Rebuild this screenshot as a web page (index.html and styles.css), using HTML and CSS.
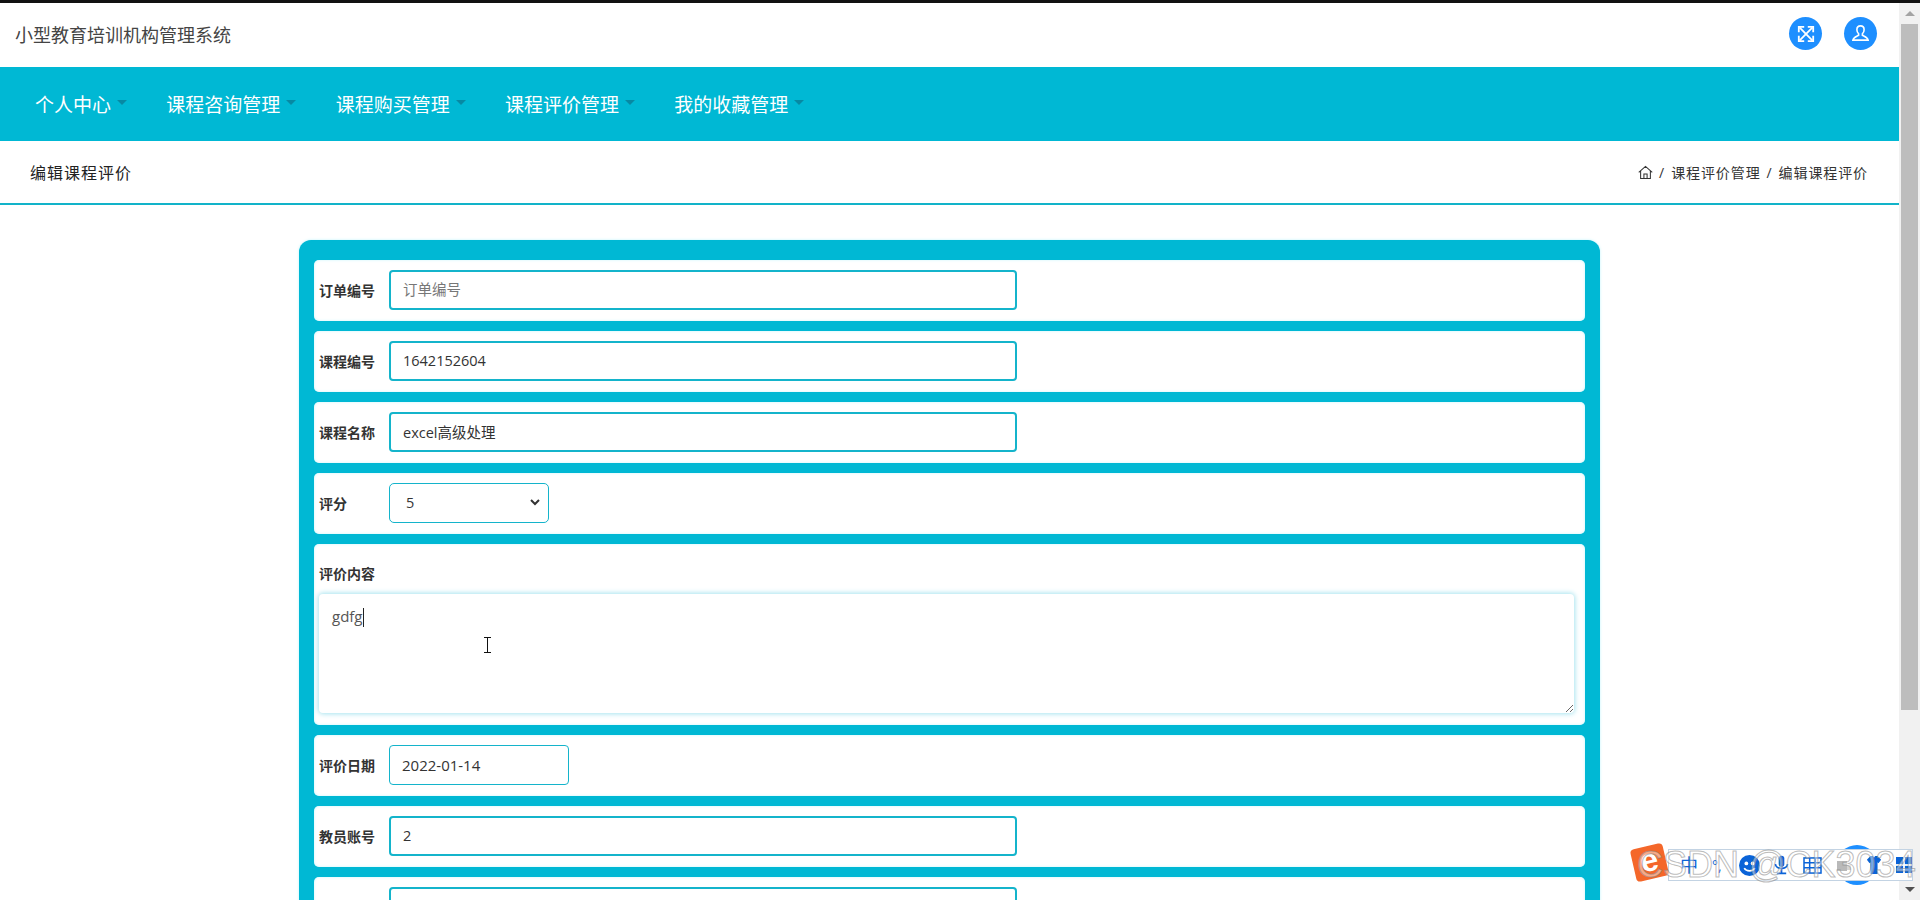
FILE: index.html
```html
<!DOCTYPE html>
<html lang="zh-CN">
<head>
<meta charset="utf-8">
<title>小型教育培训机构管理系统</title>
<link rel="stylesheet" href="styles.css">
</head>
<body>
<div class="window">
  <div class="blackbar"></div>
  <div class="viewport">
    <main class="page">
      <header class="topbar">
        <div class="brand">小型教育培训机构管理系统</div>
        <div class="top-actions">
          <span class="round">
            <svg viewBox="0 0 20 20" width="18" height="18" fill="none" stroke="#fff" stroke-width="2"><path d="M3 3 17 17M17 3 3 17"/><path d="M2 8V2h6M12 2h6v6M18 12v6h-6M8 18H2v-6"/></svg>
          </span>
          <span class="round">
            <svg viewBox="0 0 20 20" width="19" height="19" fill="none" stroke="#fff" stroke-width="1.700"><path d="M10 2c-2.500 0-3.800 1.800-3.800 4 0 1.800.8 3.300 1.800 4.300v1.500c-1.500 1-5.500 1.700-6 5.200h16c-.5-3.500-4.500-4.200-6-5.200v-1.500c1-1 1.800-2.500 1.800-4.300 0-2.200-1.300-4-3.800-4z"/></svg>
          </span>
        </div>
      </header>
      <nav class="mainnav">
        <a class="navitem">个人中心<i class="caret"></i></a>
        <a class="navitem">课程咨询管理<i class="caret"></i></a>
        <a class="navitem">课程购买管理<i class="caret"></i></a>
        <a class="navitem">课程评价管理<i class="caret"></i></a>
        <a class="navitem">我的收藏管理<i class="caret"></i></a>
      </nav>
      <div class="crumbbar">
        <div class="pagetitle">编辑课程评价</div>
        <div class="crumbs">
          <svg viewBox="0 0 16 16" width="15" height="15" fill="none" stroke="#333" stroke-width="1.100"><path d="M.8 7.800 8 1.500l7.200 6.300M2.800 6.500v8h10.400v-8M6.300 14.500V9.500h3.400v5"/></svg>
          <span>/</span><span>课程评价管理</span><span>/</span><span>编辑课程评价</span>
        </div>
      </div>
      <section class="content">
        <form class="panel">
          <div class="field"><label class="lbl">订单编号</label><input class="inp" type="text" placeholder="订单编号"></div>
          <div class="field"><label class="lbl">课程编号</label><input class="inp" type="text" value="1642152604"></div>
          <div class="field"><label class="lbl">课程名称</label><input class="inp" type="text" value="excel高级处理"></div>
          <div class="field"><label class="lbl">评分</label><select class="sel"><option>5</option></select></div>
          <div class="field field-area"><label class="lbl-top">评价内容</label><textarea class="area">gdfg</textarea></div>
          <div class="field"><label class="lbl">评价日期</label><input class="date" type="text" value="2022-01-14"></div>
          <div class="field"><label class="lbl">教员账号</label><input class="inp" type="text" value="2"></div>
          <div class="field"><label class="lbl"></label><input class="inp" type="text"></div>
        </form>
      </section>
    </main>
    <aside class="scrollbar">
      <div class="sb-btn"><i class="sb-up"></i></div>
      <div class="sb-thumb"></div>
      <div class="sb-track"></div>
      <div class="sb-btn"><i class="sb-down"></i></div>
    </aside>
  </div>

  <i class="textcaret"></i>
  <svg class="ibeam" viewBox="0 0 9 16" width="9" height="16" fill="none" stroke="#111" stroke-width="1"><path d="M1 .5h7M1 15.500h7M4.500 .5v15"/></svg>

  <div class="fab"></div>
  <div class="imebar">
    <span class="ime-zh">中</span>
    <span class="ime-dot">°,</span>
    <svg class="ime-ic" viewBox="0 0 20 20" width="21" height="21"><circle cx="10" cy="10" r="10" fill="#0a63d8"/><circle cx="7" cy="8" r="1.800" fill="#fff"/><circle cx="13" cy="8" r="1.800" fill="#fff"/><path d="M5 12.500c2 3.500 8 3.500 10 0" stroke="#fff" stroke-width="1.500" fill="none"/></svg>
    <svg class="ime-ic" viewBox="0 0 16 20" width="15" height="20"><rect x="5" y="0" width="6" height="12" rx="3" fill="#0a63d8"/><path d="M1.500 9c0 6 13 6 13 0M8 14.500V19M3 19h10" stroke="#0a63d8" stroke-width="1.800" fill="none"/></svg>
    <svg class="ime-ic" viewBox="0 0 20 18" width="19" height="17" fill="none" stroke="#0a63d8" stroke-width="1.600"><rect x="1" y="1" width="18" height="16"/><path d="M1 6h18M1 11.500h18M7 1v16M13 1v16"/></svg>
    <svg class="ime-ic" viewBox="0 0 16 14" width="16" height="14"><rect x="1" y="3" width="10" height="10" fill="#b9b9b9"/><rect x="11" y="7" width="4" height="5" fill="#d5d5d5"/></svg>
    <svg class="ime-ic" viewBox="0 0 18 20" width="16" height="20"><path d="M5 0h3c0 2 2 2 2 0h3l4 4-3 4-1-1v13H5V7L4 8 1 4z" fill="#0a63d8"/></svg>
    <svg class="ime-ic" viewBox="0 0 18 18" width="16" height="16" fill="#0a63d8"><rect x="0" y="0" width="8" height="8"/><rect x="10" y="0" width="8" height="8"/><rect x="0" y="10" width="8" height="8"/><rect x="10" y="10" width="8" height="8"/></svg>
  </div>
  <div class="csdn-logo"><span class="csdn-e">e</span></div>
  <div class="watermark">CSDN @CK3034</div>
</div>
</body>
</html>
```
FILE: styles.css
```css
* { box-sizing: border-box; }
html, body { margin: 0; padding: 0; height: 900px; overflow: hidden; background: #fff; }
body { font-family: "Open Sans", "Noto Sans CJK SC", sans-serif; color: #333; }

.window { position: relative; width: 1920px; height: 900px; display: flex; flex-direction: column; overflow: hidden; }
.blackbar { height: 3px; background: #111; flex: none; }
.viewport { flex: 1; display: flex; min-height: 0; }
.page { width: 1899px; flex: none; overflow: hidden; }

.topbar { height: 64px; display: flex; align-items: center; justify-content: space-between; padding: 0 22px 3px 15px; }
.brand { font-size: 18px; color: #444; }
.top-actions { display: flex; gap: 22px; }
.round { width: 33px; height: 33px; border-radius: 50%; background: #1e8fff; display: flex; align-items: center; justify-content: center; }

.mainnav { height: 74px; background: #00b8d4; display: flex; align-items: center; gap: 39.300px; padding-left: 35px; }
.navitem { font-size: 19px; color: #fff; display: flex; align-items: center; }
.caret { width: 0; height: 0; margin: 0 0 3px 6px; border-left: 5px solid transparent; border-right: 5px solid transparent; border-top: 5px solid #0789a3; }

.crumbbar { height: 64px; border-bottom: 2px solid #12b3c9; display: flex; align-items: center; justify-content: space-between; padding: 0 31px 0 30px; }
.pagetitle { font-size: 16px; letter-spacing: 1px; color: #222; }
.crumbs { display: flex; align-items: center; gap: 6px; font-size: 14px; letter-spacing: .9px; color: #333; }

.content { padding-top: 35px; }
.panel { width: 1301px; margin: 0 auto; background: #00b8d4; border-radius: 12px; padding: 20px 15px; box-shadow: 0 0 3px #bff3fb; }
.field { height: 61px; margin-bottom: 10px; background: #fff; border-radius: 5px; display: flex; align-items: center; padding: 0 0 2px 5px; box-shadow: inset 0 0 3px #c8f6fb; }
.lbl { width: 70px; font-size: 14px; font-weight: 700; color: #333; flex: none; }
.inp { width: 628px; height: 40px; border: 2px solid #14b4cb; border-radius: 4px; padding: 0 12px; font: 14.500px "Open Sans", "Noto Sans CJK SC", sans-serif; color: #333; background: #fff; outline: none; }
.inp::placeholder { color: #777; }
.sel { width: 160px; height: 40px; border: 1px solid #14b4cb; border-radius: 5px; padding: 0 16px; font: 14.500px "Open Sans", "Noto Sans CJK SC", sans-serif; color: #333; outline: none; appearance: none; background: #fff url("data:image/svg+xml,%3Csvg xmlns='http://www.w3.org/2000/svg' width='10' height='7'%3E%3Cpath d='M1 1l4 4 4-4' fill='none' stroke='%23333' stroke-width='2'/%3E%3C/svg%3E") no-repeat right 8px center; }
.date { width: 180px; height: 40px; border: 1px solid #14b4cb; border-radius: 4px; padding: 0 12px; font: 15px "Open Sans", "Noto Sans CJK SC", sans-serif; color: #333; background: #fff; outline: none; }
.field-area { height: 181px; display: block; padding: 20px 0 0 5px; }
.lbl-top { display: block; height: 20px; line-height: 20px; font-size: 14px; font-weight: 700; color: #333; }
.area { display: block; width: 1255px; height: 119px; margin-top: 10px; border: 0; border-radius: 4px; padding: 12px 13px; font: 15px "Open Sans", "Noto Sans CJK SC", sans-serif; color: #555; background: #fff; box-shadow: 0 0 5px 1px #a6e3ef; outline: none; }

.scrollbar { width: 21px; flex: none; background: #f1f1f1; display: flex; flex-direction: column; }
.sb-btn { height: 21px; flex: none; display: flex; align-items: center; justify-content: center; }
.sb-up { width: 0; height: 0; border-left: 5px solid transparent; border-right: 5px solid transparent; border-bottom: 5px solid #a3a3a3; }
.sb-down { width: 0; height: 0; border-left: 5px solid transparent; border-right: 5px solid transparent; border-top: 5px solid #505050; }
.sb-thumb { height: 686px; margin: 0 2px; background: #bdbdbd; flex: none; }
.sb-track { flex: 1; }

.textcaret { position: absolute; left: 363px; top: 608px; width: 1px; height: 19px; background: #222; }
.ibeam { position: absolute; left: 483px; top: 637px; }

.fab { position: absolute; left: 1837px; top: 845px; width: 40px; height: 40px; border-radius: 50%; background: #1e8fff; }
.imebar { position: absolute; left: 1668px; top: 849px; width: 245px; height: 32px; background: #fff; border: 1px solid #c3d3e3; display: flex; align-items: center; padding-left: 11px; gap: 14px; }
.ime-zh { font-size: 18px; color: #0a63d8; line-height: 1; width: 18px; }
.ime-dot { font-size: 14px; color: #0a63d8; width: 14px; }
.ime-ic { flex: none; }
.csdn-logo { position: absolute; left: 1633px; top: 846px; width: 33px; height: 33px; border-radius: 4px; background: #f4672a; transform: rotate(-13deg); display: flex; align-items: center; justify-content: center; }
.csdn-e { font: 700 32px/1 "Liberation Sans", sans-serif; color: #fff; margin-top: -5px; }
.watermark { position: absolute; left: 1637px; top: 843px; font: 36px/44px "Liberation Sans", sans-serif; white-space: nowrap; color: rgba(255,255,255,.45); -webkit-text-stroke: 1px rgba(130,130,130,.55); }
```
